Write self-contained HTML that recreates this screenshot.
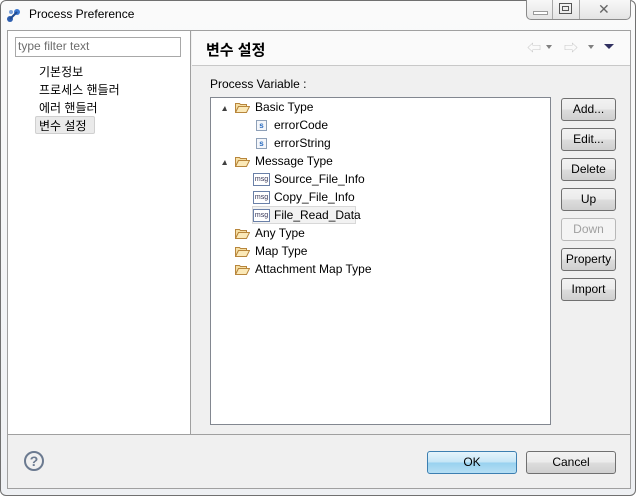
<!DOCTYPE html>
<html><head><meta charset="utf-8"><style>
*{box-sizing:border-box;margin:0;padding:0}
body{width:638px;height:496px;background:#fff;font-family:"Liberation Sans","Noto Sans CJK KR",sans-serif;font-size:12px;color:#000;position:relative;overflow:hidden}
.abs{position:absolute}
.win{left:0;top:0;width:636px;height:496px;border:1px solid #707070;border-radius:6px;background:linear-gradient(#fafafa,#eef0f3)}
.client{left:7px;top:30px;width:624px;height:459px;background:#f0f0f0;border:1px solid #a0a0a0}
.btn{position:absolute;border:1px solid #707070;border-radius:3px;background:linear-gradient(#f2f2f2 0%,#ebebeb 50%,#dddddd 51%,#cfcfcf 100%);text-align:center;line-height:21px;font-size:12px}
.tx{position:absolute;white-space:nowrap;font-size:12px}
.fold{position:absolute;width:15px;height:11px}
.si{position:absolute;width:11px;height:11px;border:1px solid #8ea0b8;background:#f4f6fa;font-size:8px;font-weight:bold;color:#2a6cc0;line-height:9px;text-align:center}
.mi{position:absolute;width:17px;height:13px;border:1px solid #6a80a8;background:#fff;font-size:7px;color:#335;line-height:11px;text-align:center}
.tri{position:absolute;width:0;height:0;border-left:3px solid transparent;border-bottom:5px solid #404040;border-right:2px solid transparent}
</style></head><body>
<div class="abs win"></div>
<svg class="abs" style="left:5px;top:6px" width="18" height="18" viewBox="0 0 18 18"><circle cx="5" cy="13" r="3" fill="#2e5fb0"/><circle cx="12" cy="6" r="3" fill="#3c78d0"/><circle cx="6" cy="6" r="2" fill="#7aa0d8"/><path d="M5 13 L12 6" stroke="#1f4a90" stroke-width="2"/></svg>
<div class="tx" style="left:29px;top:7px;font-size:12px">Process Preference</div>
<div class="abs" style="left:526px;top:0;width:105px;height:20px;border:1px solid #8a8a8a;border-top:none;border-radius:0 0 5px 5px;background:linear-gradient(#f8f8f8,#e4e4e4)"></div>
<div class="abs" style="left:552px;top:0;width:1px;height:19px;background:#a8a8a8"></div>
<div class="abs" style="left:579px;top:0;width:1px;height:19px;background:#a8a8a8"></div>
<div class="abs" style="left:533px;top:11px;width:15px;height:4px;border:1px solid #9a9a9a;background:#fff"></div>
<div class="abs" style="left:559px;top:3px;width:13px;height:11px;border:1px solid #555"><div style="margin:2px;height:5px;border:1px solid #555"></div></div>
<div class="tx" style="left:598px;top:1px;font-size:14px;color:#666">✕</div>
<div class="abs client"></div>
<div class="abs" style="left:8px;top:31px;width:183px;height:403px;background:#fff;border-right:1px solid #a0a0a0"></div>
<div class="abs" style="left:15px;top:37px;width:166px;height:20px;border:1px solid #a8a8a8;background:#fff"></div>
<div class="tx" style="left:18px;top:39px;color:#6d6d6d">type filter text</div>
<div class="tx" style="left:39px;top:63px">기본정보</div>
<div class="tx" style="left:39px;top:81px">프로세스 핸들러</div>
<div class="tx" style="left:39px;top:99px">에러 핸들러</div>
<div class="abs" style="left:35px;top:116px;width:60px;height:18px;border:1px solid #d0d0d0;border-radius:2px;background:#eaeaea"></div>
<div class="tx" style="left:39px;top:117px">변수 설정</div>
<div class="abs" style="left:192px;top:31px;width:438px;height:35px;background:#fafafa;border-bottom:1px solid #c8c8c8"></div>
<div class="tx" style="left:206px;top:39px;font-size:15px;font-weight:bold">변수 설정</div>
<div class="tx" style="left:527px;top:38px;font-size:14px;color:#c8c8c8">⇦</div>
<div class="tri" style="left:546px;top:45px;border-bottom:none;border-top:4px solid #808080;border-left:3px solid transparent;border-right:3px solid transparent"></div>
<div class="tx" style="left:564px;top:38px;font-size:14px;color:#c8c8c8">⇨</div>
<div class="tri" style="left:588px;top:45px;border-bottom:none;border-top:4px solid #808080;border-left:3px solid transparent;border-right:3px solid transparent"></div>
<div class="tri" style="left:604px;top:44px;border-bottom:none;border-top:5px solid #303060;border-left:5px solid transparent;border-right:5px solid transparent"></div>
<div class="tx" style="left:210px;top:77px">Process Variable :</div>
<div class="abs" style="left:210px;top:97px;width:341px;height:328px;background:#fff;border:1px solid #828790"></div>
<!-- tree -->
<div class="tri" style="left:222px;top:106px"></div>
<svg class="fold" style="left:235px;top:102px" viewBox="0 0 15 11"><path d="M0.5 1.5h4l1 1h6v2H3.5L0.5 10.5z" fill="#f6dfa4" stroke="#b8863c"/><path d="M3.5 4.5h11l-3 6H0.5z" fill="#fbe9b8" stroke="#b8863c"/></svg>
<div class="tx" style="left:255px;top:100px">Basic Type</div>
<div class="si" style="left:256px;top:120px">s</div><div class="tx" style="left:274px;top:118px">errorCode</div>
<div class="si" style="left:256px;top:138px">s</div><div class="tx" style="left:274px;top:136px">errorString</div>
<div class="tri" style="left:222px;top:160px"></div>
<svg class="fold" style="left:235px;top:156px" viewBox="0 0 15 11"><path d="M0.5 1.5h4l1 1h6v2H3.5L0.5 10.5z" fill="#f6dfa4" stroke="#b8863c"/><path d="M3.5 4.5h11l-3 6H0.5z" fill="#fbe9b8" stroke="#b8863c"/></svg>
<div class="tx" style="left:255px;top:154px">Message Type</div>
<div class="mi" style="left:253px;top:173px">msg</div><div class="tx" style="left:274px;top:172px">Source_File_Info</div>
<div class="mi" style="left:253px;top:191px">msg</div><div class="tx" style="left:274px;top:190px">Copy_File_Info</div>
<div class="abs" style="left:252px;top:206px;width:104px;height:18px;border:1px solid #d8d8d8;background:#f2f2f2"></div>
<div class="mi" style="left:253px;top:209px">msg</div><div class="tx" style="left:274px;top:208px">File_Read_Data</div>
<svg class="fold" style="left:235px;top:228px" viewBox="0 0 15 11"><path d="M0.5 1.5h4l1 1h6v2H3.5L0.5 10.5z" fill="#f6dfa4" stroke="#b8863c"/><path d="M3.5 4.5h11l-3 6H0.5z" fill="#fbe9b8" stroke="#b8863c"/></svg>
<div class="tx" style="left:255px;top:226px">Any Type</div>
<svg class="fold" style="left:235px;top:246px" viewBox="0 0 15 11"><path d="M0.5 1.5h4l1 1h6v2H3.5L0.5 10.5z" fill="#f6dfa4" stroke="#b8863c"/><path d="M3.5 4.5h11l-3 6H0.5z" fill="#fbe9b8" stroke="#b8863c"/></svg>
<div class="tx" style="left:255px;top:244px">Map Type</div>
<svg class="fold" style="left:235px;top:264px" viewBox="0 0 15 11"><path d="M0.5 1.5h4l1 1h6v2H3.5L0.5 10.5z" fill="#f6dfa4" stroke="#b8863c"/><path d="M3.5 4.5h11l-3 6H0.5z" fill="#fbe9b8" stroke="#b8863c"/></svg>
<div class="tx" style="left:255px;top:262px">Attachment Map Type</div>
<!-- buttons -->
<div class="btn" style="left:561px;top:98px;width:55px;height:23px">Add...</div>
<div class="btn" style="left:561px;top:128px;width:55px;height:23px">Edit...</div>
<div class="btn" style="left:561px;top:158px;width:55px;height:23px">Delete</div>
<div class="btn" style="left:561px;top:188px;width:55px;height:23px">Up</div>
<div class="btn" style="left:561px;top:218px;width:55px;height:23px;border-color:#b8b8b8;background:#f4f4f4;color:#a0a0a0">Down</div>
<div class="btn" style="left:561px;top:248px;width:55px;height:23px">Property</div>
<div class="btn" style="left:561px;top:278px;width:55px;height:23px">Import</div>
<div class="abs" style="left:8px;top:434px;width:622px;height:1px;background:#a0a0a0"></div>
<div class="abs" style="left:24px;top:451px;width:20px;height:20px;border:2px solid #6b7a90;border-radius:50%;text-align:center;font-weight:bold;font-size:14px;line-height:16px;color:#6b7a90">?</div>
<div class="btn" style="left:427px;top:451px;width:90px;height:23px;border-color:#3c7fb1;background:linear-gradient(#e5f4fc 0%,#c4e5f6 50%,#98d1ef 51%,#b6dff4 100%)">OK</div>
<div class="btn" style="left:526px;top:451px;width:90px;height:23px">Cancel</div>
</body></html>
